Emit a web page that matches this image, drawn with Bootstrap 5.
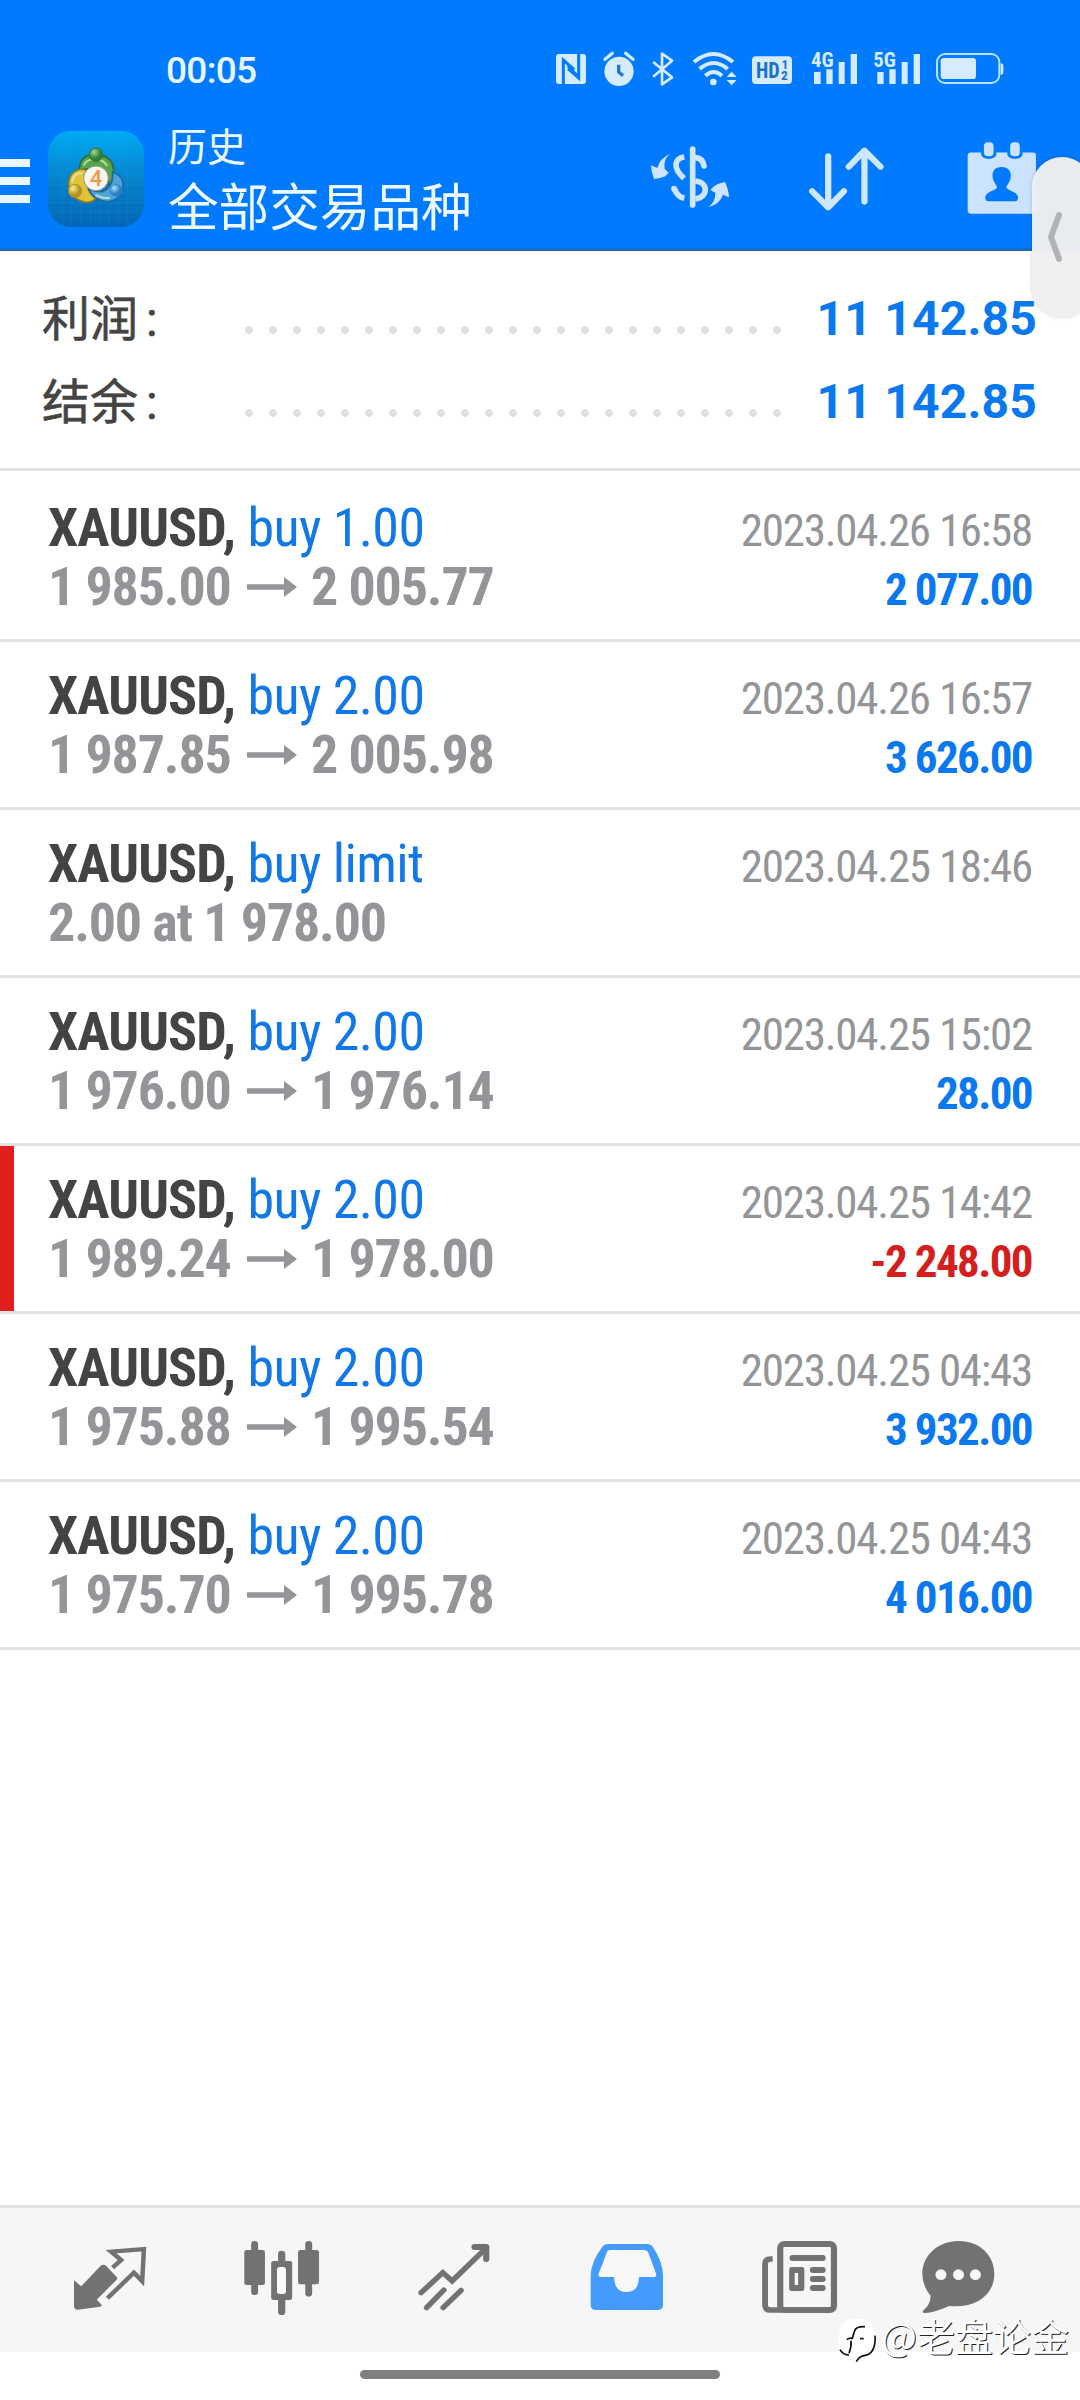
<!DOCTYPE html>
<html lang="zh-CN">
<head>
<meta charset="utf-8">
<meta name="viewport" content="width=device-width, initial-scale=1">
<title>历史</title>
<link href="https://cdn.jsdelivr.net/npm/bootstrap@5.3.0/dist/css/bootstrap.min.css" rel="stylesheet">
<style>
body{font-family:Roboto,"Noto Sans CJK SC",sans-serif;background:#fff;color:#444;width:1080px;height:2400px;overflow:hidden}
svg{display:block;flex:none}
.topbar{background:#007aff;height:251px;border-bottom:3px solid #1a6cc0}
.statusbar{height:113px;padding-left:166px}
.clock{font-size:37px;font-weight:500;font-stretch:92%;letter-spacing:-.7px;line-height:44px;padding-top:49px;width:384px;color:#e8f7ff}
.status-icons{padding-top:44px}
.appbar{height:135px}
.burger{width:30px;margin-right:14px;padding-top:46px;gap:10px}
.burger i{display:block;height:8px;background:#e9f8ff}
.heads{width:472px;margin-left:20px;color:#eefaff;font-family:"Noto Sans CJK SC",sans-serif}
.head-s{font-size:39px;line-height:48px;padding-top:7px}
.head-l{font-size:50.6px;line-height:60px;padding-top:6px}
.tab-handle{right:-12px;top:157px;width:60px;height:160px;border-radius:36px;background:rgba(240,240,241,.97);box-shadow:0 0 4px rgba(0,0,0,.18);padding:54px 0 0 15px}
.totals{height:220px;padding:26px 43px 0 42px;border-bottom:3px solid #e3e3e3}
.total-row{height:83px;line-height:83px;font-size:48px}
.total-name{width:195px;font-weight:400;-webkit-text-stroke:.6px #444;padding-top:1px}
.total-name i{font-style:normal;margin-left:8px}
.leader{width:552px;height:83px;background:radial-gradient(circle at 12px 4px,#e0e0e0 3.6px,transparent 4.2px) 0 49px/24px 8px repeat-x}
.total-val{color:#0a78ee;font-weight:700;letter-spacing:.2px}
.trade{height:168px;padding:24px 48px 0 48px;border-bottom:3px solid #e3e3e3;font-stretch:75%;line-height:59px;font-size:54px;color:#949598}
.trade:first-child{height:171px;padding-top:27px}
.trade b{color:#444;letter-spacing:-.9px}
.deal{color:#1277e8;letter-spacing:-.6px}
.prices{font-weight:700;letter-spacing:-1.15px}
.prices svg{display:inline-block;vertical-align:8px;margin:0 3px 0 16px}
.meta{font-size:45px;padding-top:3px;letter-spacing:-1.25px}
.gain,.loss{font-weight:700;color:#0a78ee;letter-spacing:-1.6px}
.loss{color:#d51f1f}
.loss-row{background:linear-gradient(#e01f1f,#e01f1f) 0 0/14px 100% no-repeat}
.dock{height:147px;background:#f6f6f6;border-top:3px solid #e3e3e3;padding:24px 0 0 64px}
.dock-wrap{margin-top:auto;height:195px}
.home-bar{width:360px;height:9px;border-radius:5px;background:#7f7f7f;margin:18px auto 0}
.stamp{left:835px;top:2315px;gap:4px}
.stamp span{font:400 38px/40px "Noto Sans CJK SC",sans-serif;color:#fff;text-shadow:1px 1px 0 #222;white-space:nowrap}
</style>
</head>
<body class="d-flex flex-column position-relative">
<header class="topbar flex-shrink-0">
  <div class="statusbar d-flex">
    <div class="clock">00:05</div>
    <div class="status-icons d-flex">
      <svg width="195" height="50" viewBox="0 0 585 150" fill="#d6ecfc">
        <rect x="18" y="30" width="90" height="90" rx="9"/>
        <path d="M40 121V48l32 28M86 29v73L54 74M40 48l32 30M54 66l32 34" fill="none" stroke="#007aff" stroke-width="9"/>
        <circle cx="207" cy="82" r="44"/><path d="M165 46l22-18M249 46l-22-18" stroke="#d6ecfc" stroke-width="10" stroke-linecap="round"/>
        <path d="M206 62v22l13 11" fill="none" stroke="#1b78d8" stroke-width="10" />
        <path d="M312 56l54 44-30 21V29l30 21-54 46" fill="none" stroke="#d6ecfc" stroke-width="8" stroke-linejoin="round" stroke-linecap="round"/>
        <g fill="none" stroke="#d6ecfc" stroke-width="12"><path d="M432 54q58-48 117 0"/><path d="M449 75q42-36 84 0"/><path d="M466 95q25-22 50 0"/></g>
        <circle cx="490" cy="114" r="10"/><path d="M530 99l15-16 15 16zM530 108h30l-15 16z"/>
      </svg>
      <svg width="270" height="50" viewBox="0 0 810 150" fill="#d6ecfc">
        <rect x="21" y="37" width="120" height="83" rx="12"/>
        <g font-family="Roboto" font-weight="700" style="font-stretch:75%"><text x="33" y="102" font-size="66" fill="#1672cf" textLength="71" lengthAdjust="spacingAndGlyphs">HD</text><text x="110" y="76" font-size="38" fill="#1672cf">1</text><text x="108" y="109" font-size="40" fill="#1672cf">2</text>
        <text x="198" y="69" font-size="62" textLength="68" lengthAdjust="spacingAndGlyphs">4G</text><text x="385" y="69" font-size="62" textLength="68" lengthAdjust="spacingAndGlyphs">5G</text></g>
        <path d="M207 84h20v36h-20zM244 76h19v44h-19zM281 54h18v66h-18zM317 30h19v90h-19zM397 84h19v36h-19zM433 76h19v44h-19zM470 54h18v66h-18zM506 30h19v90h-19z"/>
        <rect x="576" y="30" width="187" height="87" rx="24" fill="none" stroke="#b5e4ff" stroke-width="6"/><rect x="587" y="42" width="106" height="63" rx="10"/><path d="M767 58q8 0 8 8v18q0 8-8 8z" />
      </svg>
    </div>
  </div>
  <div class="appbar d-flex">
    <div class="burger d-flex flex-column"><i></i><i></i><i></i></div>
    <svg width="104" height="104" viewBox="0 0 312 312" style="margin-top:14px">
      <defs>
        <linearGradient id="tile" x1="0" y1="0" x2="0" y2="1"><stop offset="0" stop-color="#00aaf4"/><stop offset=".55" stop-color="#087fc8"/><stop offset="1" stop-color="#0266b8"/></linearGradient>
        <radialGradient id="gr" cx=".35" cy=".3"><stop offset="0" stop-color="#a4d67e"/><stop offset="1" stop-color="#30803a"/></radialGradient>
        <radialGradient id="ye" cx=".35" cy=".3"><stop offset="0" stop-color="#fbf08c"/><stop offset="1" stop-color="#b69320"/></radialGradient>
        <radialGradient id="bl" cx=".35" cy=".3"><stop offset="0" stop-color="#a8e0fa"/><stop offset="1" stop-color="#2a80c4"/></radialGradient>
      </defs>
      <rect x="12" y="12" width="288" height="288" rx="68" fill="url(#tile)"/>
      <path d="M55 20v272M83 13v286M111 12v288M139 12v288M167 12v288M195 12v288M223 12v288M251 18v276M14 60h284M12 88h288M12 116h288M12 144h288M12 172h288M12 200h288M12 228h288M18 256h276" stroke="#30b2ed" stroke-opacity=".22" stroke-width="2"/>
      <g stroke-width="5">
        <path d="M106 134q-2-52 50-52 56 4 53 58 0 18-13 36-3-34-26-52l-27 0q-18 0-37 10z" fill="#56a54a" stroke="#2b6c3b"/>
        <path d="M120 126q-44 2-46 45 0 46 53 55 20 0 28-12-23-16-25-40 0-20 10-31z" fill="#dfc33a" stroke="#8e7c20"/>
        <path d="M134 186q13 33 56 38 47-5 47-50 0-28-31-39 3 42-28 58-23 3-44-7z" fill="#4ba4dc" stroke="#20699f"/>
      </g>
      <path d="M119 115q9-20 37-18 25 3 33 20M84 165q5-28 31-26M154 204q26 12 43 8" fill="none" stroke="#e4f4b8" stroke-opacity=".7" stroke-width="6"/>
      <circle cx="156" cy="83" r="20" fill="url(#gr)" stroke="#2b7039" stroke-width="3"/><circle cx="93" cy="192" r="20" fill="url(#ye)" stroke="#988122" stroke-width="2"/><circle cx="216" cy="190" r="18" fill="url(#bl)" stroke="#3182b8" stroke-width="2"/>
      <circle cx="156" cy="154" r="37" fill="#f7f4f2" stroke="#8c978a" stroke-width="3"/>
      <text x="156" y="177" text-anchor="middle" font-family="Roboto" font-weight="500" font-size="64" fill="#f19a42">4</text>
    </svg>
    <div class="heads"><div class="head-s">历史</div><div class="head-l">全部交易品种</div></div>
    <svg width="100" height="80" viewBox="0 0 300 240" style="margin-top:24px" fill="#cfe5fd">
      <path d="M92 50q-23 15-18 45l12 12-10 11q-19 8-34 8-8-20-9-41l19 8q7-30 40-43zM205 210q22-16 21-43l-15-8q17-21 44-24 10 19 12 46l-18-8q-10 29-44 37z"/>
      <g fill="none" stroke="#cfe5fd" stroke-width="17"><path d="M133 60c-28 4-38 30-1 64"/><path d="M166 62q22 1 26 25" stroke-linecap="round"/><path d="M166 132c42 4 38 50 0 54"/><path d="M103 154q8 25 30 30"/></g>
      <path d="M158 36v168" stroke="#cfe5fd" stroke-width="17" stroke-linecap="round"/><path d="M102 155v1" stroke="#cfe5fd" stroke-width="17" stroke-linecap="round"/>
    </svg>
    <svg width="75" height="64" viewBox="782 350 215 191" preserveAspectRatio="none" style="margin:34px 0 0 69px" fill="none" stroke="#cfe6ff" stroke-width="18" stroke-linecap="round" stroke-linejoin="round"><path d="M837 378v150M791 482l46 48 45-48M941 513V361M896 409l45-48 46 48"/></svg>
    <svg width="70" height="72" viewBox="1241 338 203 213" preserveAspectRatio="none" style="margin:29px 0 0 83px"><rect x="1243" y="369" width="198" height="181" rx="9" fill="#cbe3ff"/><path d="M1282 366h44v10q-4 12-22 12t-22-12zM1358 366h44v10q-4 12-22 12t-22-12z" fill="#007aff"/><rect x="1290" y="339" width="28" height="41" rx="12" fill="#cbe3ff"/><rect x="1366" y="339" width="28" height="41" rx="12" fill="#cbe3ff"/><path d="M1341 412c31 0 32 31 20 48l-6 11c0 11 34 12 34 32q0 10-8 10h-78q-9 0-9-10c0-20 34-21 34-32l-6-11c-12-17-11-48 19-48z" fill="#007aff"/></svg>
  </div>
</header>
<div class="tab-handle position-absolute"><svg width="16" height="52" viewBox="0 0 16 52" fill="none" stroke="#b0b2b5" stroke-width="6" stroke-linecap="round" stroke-linejoin="round"><path d="M12 4L4 26l8 22"/></svg></div>
<section class="totals flex-shrink-0">
  <div class="total-row d-flex"><span class="total-name">利润<i>:</i></span><span class="leader"></span><span class="total-val ms-auto">11 142.85</span></div>
  <div class="total-row d-flex"><span class="total-name">结余<i>:</i></span><span class="leader"></span><span class="total-val ms-auto">11 142.85</span></div>
</section>
<svg width="0" height="0" class="position-absolute"><defs><symbol id="arr" viewBox="0 0 50 20"><path d="M0 7.2h37V0l13 10-13 10v-7.200H0z" fill="#949598"/></symbol></defs></svg>
<main class="flex-shrink-0">
  <div class="trade d-flex justify-content-between"><div><div><b>XAUUSD,</b> <span class="deal">buy 1.00</span></div><div class="prices">1 985.00<svg width="50" height="20"><use href="#arr"/></svg> 2 005.77</div></div><div class="meta text-end"><div>2023.04.26 16:58</div><div class="gain">2 077.00</div></div></div>
  <div class="trade d-flex justify-content-between"><div><div><b>XAUUSD,</b> <span class="deal">buy 2.00</span></div><div class="prices">1 987.85<svg width="50" height="20"><use href="#arr"/></svg> 2 005.98</div></div><div class="meta text-end"><div>2023.04.26 16:57</div><div class="gain">3 626.00</div></div></div>
  <div class="trade d-flex justify-content-between"><div><div><b>XAUUSD,</b> <span class="deal">buy limit</span></div><div class="prices">2.00 at 1 978.00</div></div><div class="meta text-end"><div>2023.04.25 18:46</div></div></div>
  <div class="trade d-flex justify-content-between"><div><div><b>XAUUSD,</b> <span class="deal">buy 2.00</span></div><div class="prices">1 976.00<svg width="50" height="20"><use href="#arr"/></svg> 1 976.14</div></div><div class="meta text-end"><div>2023.04.25 15:02</div><div class="gain">28.00</div></div></div>
  <div class="trade loss-row d-flex justify-content-between"><div><div><b>XAUUSD,</b> <span class="deal">buy 2.00</span></div><div class="prices">1 989.24<svg width="50" height="20"><use href="#arr"/></svg> 1 978.00</div></div><div class="meta text-end"><div>2023.04.25 14:42</div><div class="loss">-2 248.00</div></div></div>
  <div class="trade d-flex justify-content-between"><div><div><b>XAUUSD,</b> <span class="deal">buy 2.00</span></div><div class="prices">1 975.88<svg width="50" height="20"><use href="#arr"/></svg> 1 995.54</div></div><div class="meta text-end"><div>2023.04.25 04:43</div><div class="gain">3 932.00</div></div></div>
  <div class="trade d-flex justify-content-between"><div><div><b>XAUUSD,</b> <span class="deal">buy 2.00</span></div><div class="prices">1 975.70<svg width="50" height="20"><use href="#arr"/></svg> 1 995.78</div></div><div class="meta text-end"><div>2023.04.25 04:43</div><div class="gain">4 016.00</div></div></div>
</main>
<footer class="dock-wrap flex-shrink-0">
  <nav class="dock d-flex">
    <svg width="93" height="93" viewBox="186 126 270 279" preserveAspectRatio="none"><path d="M300 224q5 0 8 3l31 34q3 4 0 8l-58 60 13 14q4 5-3 7l-65 9q-10 0-11-9v-79l21 18 56-61q4-4 8-4z" fill="#727272"/><path d="M327 233l25-23-29-25 95-8-5 97-24-26-77 77" fill="none" stroke="#727272" stroke-width="13" stroke-linejoin="miter"/></svg>
    <svg width="93" height="93" viewBox="682 126 270 279" preserveAspectRatio="none" style="margin-left:78px"><g fill="#727272"><rect x="709" y="180" width="60" height="105" rx="7"/><rect x="729" y="153" width="20" height="162" rx="10"/><rect x="865" y="180" width="61" height="103" rx="7"/><rect x="886" y="153" width="20" height="167" rx="10"/><rect x="807" y="182" width="21" height="193" rx="10"/><rect x="787" y="213" width="61" height="117" rx="7"/></g><rect x="804" y="231" width="26" height="81" rx="8" fill="#fbfbfb"/></svg>
    <svg width="93" height="93" viewBox="1181 126 270 279" preserveAspectRatio="none" style="margin-left:79px" fill="none" stroke="#727272" stroke-width="16" stroke-linecap="round"><path d="M1222 308l63-60 27 25 97-97M1238 353l50-53M1286 353l52-52"/><path d="M1377 171h34v36" stroke-width="18" stroke-linejoin="round"/></svg>
    <svg width="93" height="93" viewBox="115 126 270 279" preserveAspectRatio="none" style="margin-left:80px"><path d="M198 162h110q13 0 19 10 28 43 29 85v87q0 16-16 16H162q-16 0-16-16v-87q1-42 33-85 6-10 19-10z" fill="#429bfd"/><path d="M203 180h95q13 0 16 10l22 61q2 10-8 10h-42q0 45-37 45-34 0-35-45h-38q-10 0-7-10l23-61q2-10 11-10z" fill="#f7f7f7"/></svg>
    <svg width="93" height="93" viewBox="620 126 270 279" preserveAspectRatio="none" style="margin-left:80px"><g fill="none" stroke="#727272"><rect x="699" y="162" width="156" height="198" rx="12" stroke-width="18"/><path d="M677 207h-6q-16 0-16 16v121q0 16 16 16h35" stroke-width="17"/></g><g fill="#727272"><rect x="726" y="195" width="105" height="18" rx="9"/><path fill-rule="evenodd" d="M732 231h30q7 0 7 7v58q0 7-7 7h-30q-7 0-7-7v-58q0-7 7-7zm9 18v36h10v-36z"/><rect x="785" y="231" width="46" height="18" rx="9"/><rect x="785" y="258" width="46" height="18" rx="9"/><rect x="785" y="285" width="46" height="18" rx="9"/></g></svg>
    <svg width="93" height="93" viewBox="1079 126 270 279" preserveAspectRatio="none" style="margin-left:66px"><path d="M1214 153c65 0 104 46 104 98 0 67-57 105-131 97q-43 20-70 21c-8 0-9-5-4-9q20-17 20-43-24-30-24-66c0-55 46-98 105-98z" fill="#727272"/><g fill="#f7f7f7"><circle cx="1163" cy="254" r="16"/><circle cx="1214" cy="254" r="16"/><circle cx="1263" cy="254" r="16"/></g></svg>
  </nav>
  <div class="home-bar"></div>
</footer>
<div class="stamp position-absolute d-flex">
  <svg width="42" height="50" viewBox="18 18 126 150"><path d="M66 30h38q32 5 32 48 0 42-29 50l-25 30 3-30q-30 6-52 8 0-6-5-30-2-72 38-76z" fill="#fff"/><path d="M108 53q-27-1-31 12l-7 23q-9-2-17 4M93 89h11M66 95q2 18-6 38M33 122q9 16 27 16M138 80c3 40-12 59-34 60q-15 4-22 18" fill="none" stroke="#111" stroke-width="5"/></svg>
  <span>@老盘论金</span>
</div>
<script src="https://cdn.jsdelivr.net/npm/bootstrap@5.3.0/dist/js/bootstrap.bundle.min.js"></script>
</body>
</html>
